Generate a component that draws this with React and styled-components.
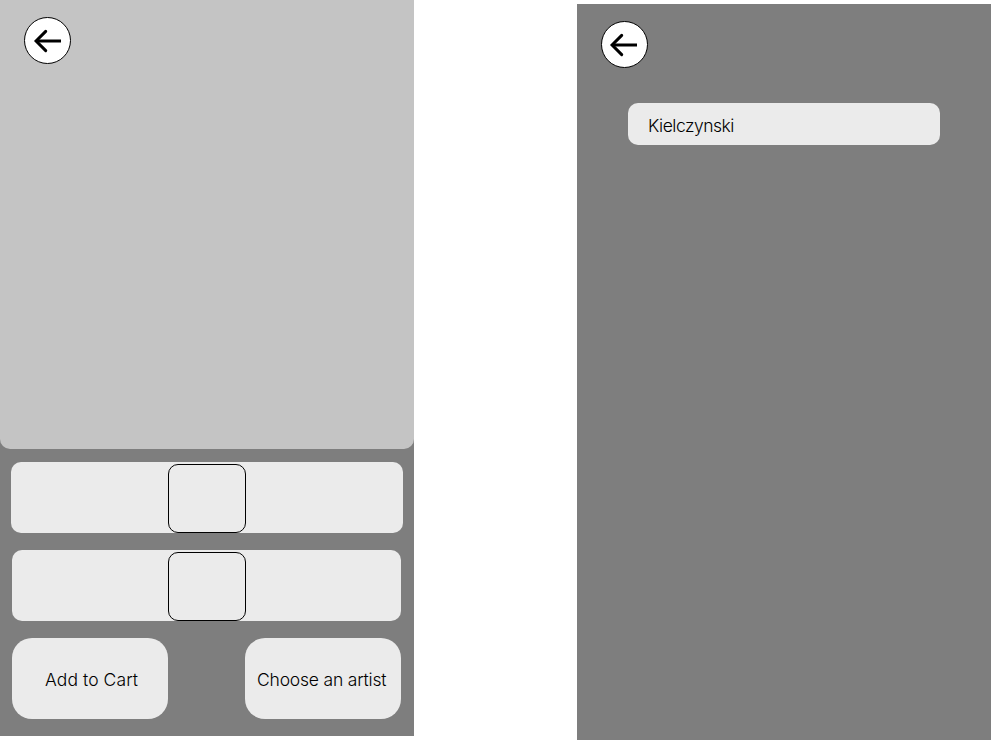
import React from "react";
import styled, { createGlobalStyle } from "styled-components";

const GlobalStyle = createGlobalStyle`
  * { box-sizing: border-box; }
  body { margin: 0; background: #fff; overflow: hidden; }
  button { font: inherit; color: inherit; border: 0; padding: 0; }
`;

const Board = styled.main`
  display: flex;
  justify-content: space-between;
  width: 991px;
  height: 740px;
  color: #000;
  font-family: Inter, sans-serif;
  font-size: 17.5px;
  font-weight: 300;
  line-height: 24px;
`;

const Screen = styled.section`
  display: flex;
  flex-direction: column;
  width: 414px;
  height: 736px;
  background: #7e7e7e;
  align-self: ${(p) => p.$align};
`;

const Preview = styled.div`
  height: 449px;
  padding: 17px 24px;
  background: #c4c4c4;
  border-radius: 0 0 10px 10px;
`;

const Header = styled.header`
  padding: 17px 24px 35px;
`;

const RoundButton = styled.button`
  display: block;
  width: 47px;
  height: 47px;
  background: #fff;
  border: 1px solid #000;
  border-radius: 50%;

  svg { display: block; }
`;

const Track = styled.div`
  display: flex;
  align-items: flex-end;
  width: ${(p) => p.$width}px;
  height: 71px;
  margin: ${(p) => p.$margin};
  padding-left: ${(p) => p.$inset}px;
  background: #ebebeb;
  border-radius: 10px;
`;

const Thumb = styled.div`
  width: 78.4px;
  height: 69px;
  border: 1px solid #000;
  border-radius: 10px;
`;

const Actions = styled.div`
  display: flex;
  justify-content: space-between;
  margin: 17px 13px 0 12px;
`;

const ActionButton = styled.button`
  width: 156px;
  height: 81px;
  padding: ${(p) => p.$padding};
  background: #ebebeb;
  border-radius: 20px;
  text-align: left;
  white-space: nowrap;
  letter-spacing: ${(p) => p.$tracking}px;
`;

const ArtistOption = styled.button`
  width: 312px;
  height: 42px;
  margin-left: 51px;
  padding: 3px 0 0 20px;
  background: #ebebeb;
  border-radius: 10px;
  text-align: left;
  letter-spacing: ${(p) => p.$tracking}px;
`;

function BackButton({ shift = 0 }) {
  return (
    <RoundButton aria-label="Back">
      <svg width="45" height="45" viewBox={`${shift} 0 45 45`} fill="none" stroke="#000" strokeWidth="3">
        <path d="M36 23H11" />
        <path d="M20.7 13.4L11.1 23L20.7 32.6" strokeLinecap="round" strokeLinejoin="miter" />
      </svg>
    </RoundButton>
  );
}

export default function App() {
  return (
    <>
      <GlobalStyle />
      <Board>
        <Screen $align="flex-start">
          <Preview>
            <BackButton />
          </Preview>
          <Track $width={392} $margin="13px 0 0 11px" $inset={157}>
            <Thumb />
          </Track>
          <Track $width={389} $margin="17px 0 0 12px" $inset={156}>
            <Thumb />
          </Track>
          <Actions>
            <ActionButton $padding="2px 0 0 33px" $tracking={0.08}>Add to Cart</ActionButton>
            <ActionButton $padding="2px 0 0 12px" $tracking={-0.2}>Choose an artist</ActionButton>
          </Actions>
        </Screen>
        <Screen $align="flex-end">
          <Header>
            <BackButton shift={1} />
          </Header>
          <ArtistOption $tracking={-0.5}>Kielczynski</ArtistOption>
        </Screen>
      </Board>
    </>
  );
}
